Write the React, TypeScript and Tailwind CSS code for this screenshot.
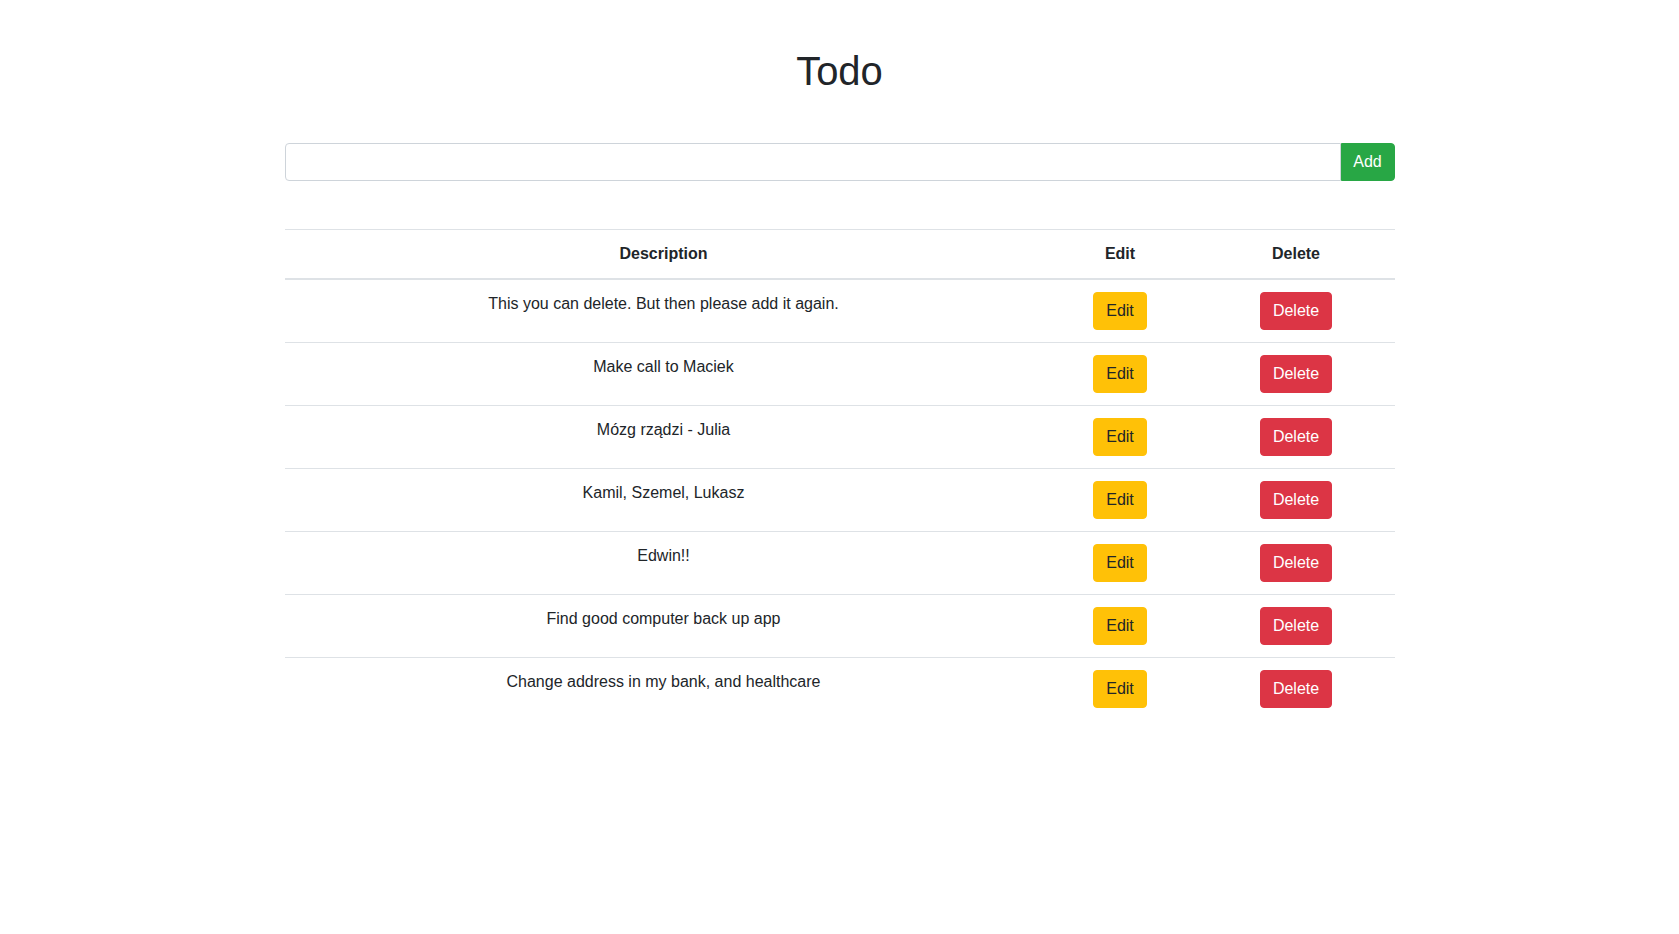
import { useState } from "react";

const initialTodos = [
  "This you can delete. But then please add it again.",
  "Make call to Maciek",
  "Mózg rządzi - Julia",
  "Kamil, Szemel, Lukasz",
  "Edwin!!",
  "Find good computer back up app",
  "Change address in my bank, and healthcare",
];

export default function App() {
  const [todos, setTodos] = useState(initialTodos);
  const [text, setText] = useState("");

  const add = () => {
    if (!text.trim()) return;
    setTodos([...todos, text.trim()]);
    setText("");
  };

  return (
    <div
      className="min-h-screen bg-white text-[#212529]"
      style={{ fontFamily: "'Liberation Sans', Arial, sans-serif" }}
    >
      <div className="mx-auto w-[1110px]">
        <h1 className="pt-[47px] text-center text-[40px] leading-[48px] font-normal">Todo</h1>

        {/* input + add button as an input-group */}
        <div className="mt-[48px] flex h-[38px]">
          <input
            value={text}
            onChange={(e) => setText(e.target.value)}
            className="h-[38px] flex-1 rounded-l-[4px] border border-[#ced4da] px-3 text-base outline-none"
          />
          <button
            onClick={add}
            className="h-[38px] w-[54px] rounded-r-[4px] border border-[#28a745] bg-[#28a745] text-base leading-6 text-white"
          >
            Add
          </button>
        </div>

        <table className="mt-[48px] w-full border-collapse text-base leading-6">
          <thead>
            <tr>
              <th className="w-[758px] border-t border-b-2 border-t-[#dee2e6] border-b-[#dee2e6] p-3 text-center font-bold">
                Description
              </th>
              <th className="w-[155px] border-t border-b-2 border-t-[#dee2e6] border-b-[#dee2e6] p-3 text-center font-bold">
                Edit
              </th>
              <th className="border-t border-b-2 border-t-[#dee2e6] border-b-[#dee2e6] p-3 text-center font-bold">
                Delete
              </th>
            </tr>
          </thead>
          <tbody>
            {todos.map((t, i) => (
              <tr key={i} className="border-t border-[#dee2e6] first:border-t-0">
                <td className="p-3 text-center align-top">{t}</td>
                <td className="p-3 text-center align-top">
                  <button className="h-[38px] rounded-[4px] border border-[#ffc107] bg-[#ffc107] px-3 text-[#212529]">
                    Edit
                  </button>
                </td>
                <td className="p-3 text-center align-top">
                  <button
                    onClick={() => setTodos(todos.filter((_, j) => j !== i))}
                    className="h-[38px] rounded-[4px] border border-[#dc3545] bg-[#dc3545] px-3 text-white"
                  >
                    Delete
                  </button>
                </td>
              </tr>
            ))}
          </tbody>
        </table>
      </div>
    </div>
  );
}
